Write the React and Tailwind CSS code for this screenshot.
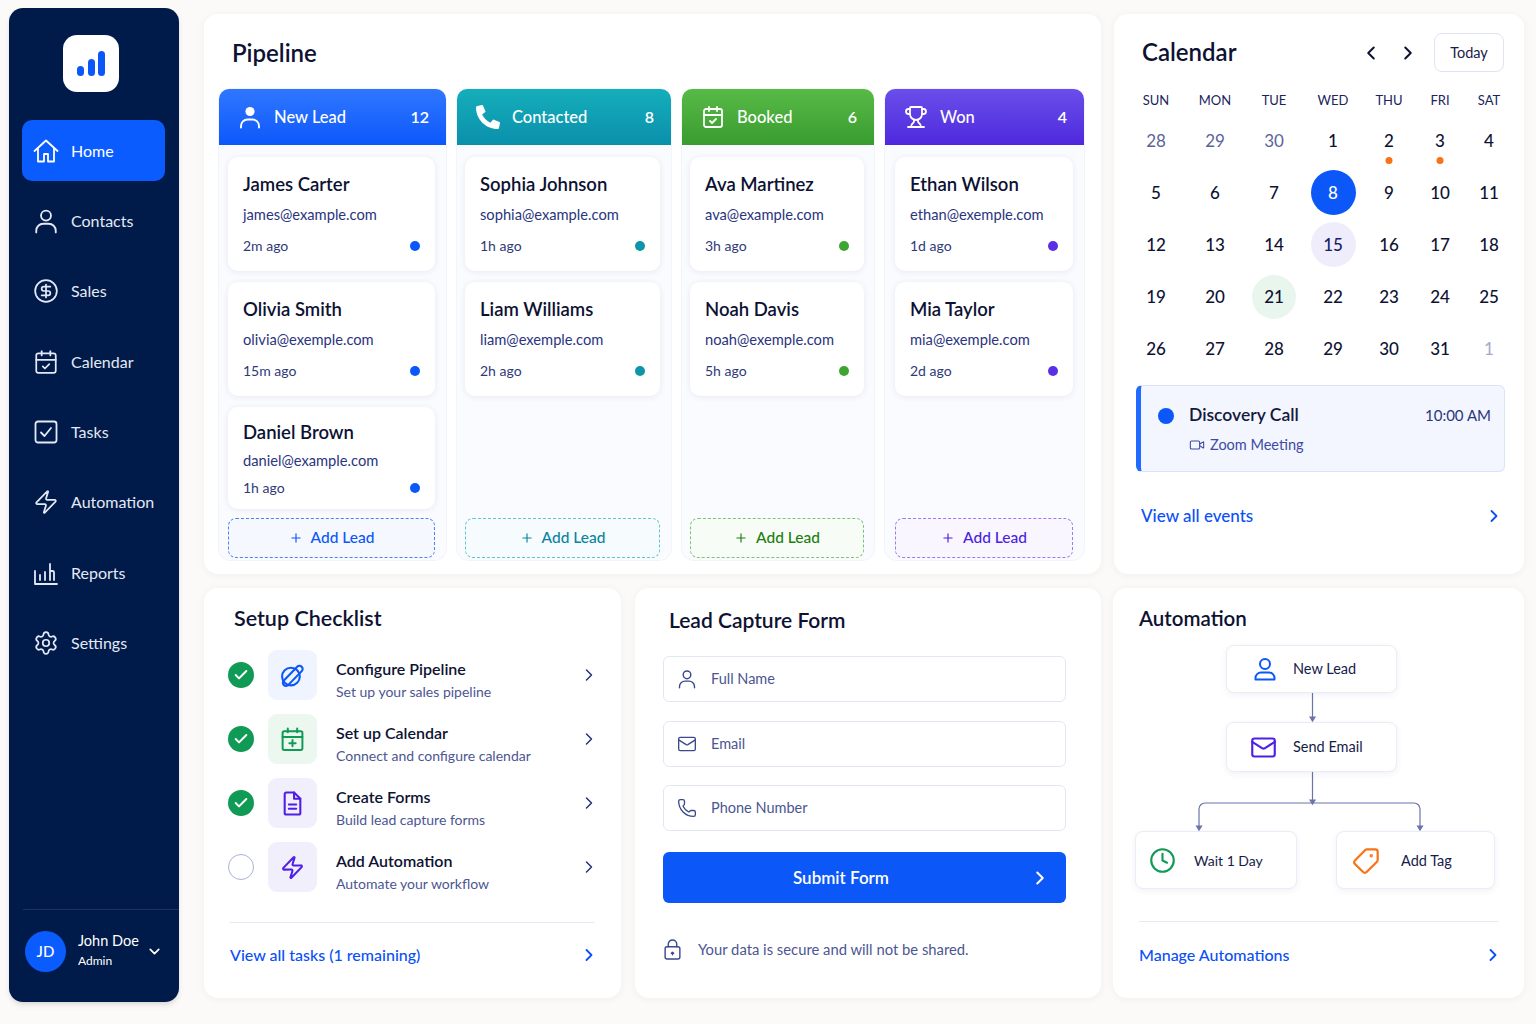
import React from "react";
import {
  CircleDollarSign, CalendarCheck, Zap, Settings, ChevronDown, ChevronLeft, ChevronRight,
  Trophy, Plus, Video, Mail, Phone, Clock, Tag, Check,
} from "lucide-react";
import { FaPhoneAlt } from "react-icons/fa";

const HomeIcon = ({ className }) => (
  <svg viewBox="0 0 26 26" fill="none" stroke="currentColor" strokeWidth="1.8" strokeLinecap="round" strokeLinejoin="round" className={className}>
    <path d="M1.5 13 13 2.5 24.5 13" />
    <path d="M5 10.5V23.5h6v-7.5h4v7.5h6V10.5" />
  </svg>
);

const UserIcon = ({ className }) => (
  <svg viewBox="0 0 24 24" fill="none" stroke="currentColor" strokeWidth="1.7" strokeLinecap="round" strokeLinejoin="round" className={className}>
    <circle cx="12" cy="7" r="4.6" />
    <path d="M3 22.5v-1.5a6.5 6.5 0 0 1 6.5-6.5h5a6.5 6.5 0 0 1 6.5 6.5v1.5" />
  </svg>
);

const LeadHeadIcon = ({ className }) => (
  <svg viewBox="0 0 24 24" fill="none" stroke="currentColor" strokeWidth="1.9" strokeLinecap="round" className={className}>
    <circle cx="12" cy="6.5" r="4.6" fill="currentColor" stroke="none" />
    <path d="M3 22.5v-1.5a6.5 6.5 0 0 1 6.5-6.5h5a6.5 6.5 0 0 1 6.5 6.5v1.5" />
  </svg>
);

const FlowUserIcon = ({ className }) => (
  <svg viewBox="0 0 24 24" fill="none" stroke="currentColor" strokeWidth="2" strokeLinecap="round" strokeLinejoin="round" className={className}>
    <circle cx="12" cy="7" r="5" />
    <path d="M2.5 22.5v-1.5a5.5 5.5 0 0 1 5.5-5.5h8a5.5 5.5 0 0 1 5.5 5.5v1.5z" />
  </svg>
);

const TaskSquareIcon = ({ className }) => (
  <svg viewBox="0 0 26 26" fill="none" stroke="currentColor" strokeWidth="1.8" strokeLinecap="round" strokeLinejoin="round" className={className}>
    <rect x="2.5" y="2.5" width="21" height="21" rx="2.5" />
    <path d="M8 13.5l3.5 3.5L18 9" />
  </svg>
);

const ReportsIcon = ({ className }) => (
  <svg viewBox="0 0 26 26" fill="none" stroke="currentColor" strokeWidth="1.8" strokeLinecap="round" strokeLinejoin="round" className={className}>
    <path d="M2 11v13h22" />
    <path d="M7 20v-5M12 20v-8M17 20V4M17 11h2.5a1.5 1.5 0 0 1 1.5 1.5V20" />
  </svg>
);

const PipelineIcon = ({ className }) => (
  <svg viewBox="0 0 24 24" fill="none" stroke="currentColor" strokeWidth="2" strokeLinecap="round" className={className}>
    <ellipse cx="10.5" cy="13" rx="8.5" ry="8.5" />
    <path d="M3.5 17 16.5 3.6a3 3 0 0 1 4.4 4.2L8 21a3 3 0 0 1-4.5-4z" />
  </svg>
);

const CalendarPlusIcon = ({ className }) => (
  <svg viewBox="0 0 24 24" fill="none" stroke="currentColor" strokeWidth="1.9" strokeLinecap="round" strokeLinejoin="round" className={className}>
    <rect x="2.5" y="4" width="19" height="18" rx="1.5" />
    <path d="M2.5 9.5h19M7.5 1.5V5M16.5 1.5V5M12 12.5v6M9 15.5h6" />
  </svg>
);

const FormIcon = ({ className }) => (
  <svg viewBox="0 0 24 24" fill="none" stroke="currentColor" strokeWidth="2" strokeLinecap="round" strokeLinejoin="round" className={className}>
    <path d="M13.5 1.5H6a1.5 1.5 0 0 0-1.5 1.5v18A1.5 1.5 0 0 0 6 22.5h12a1.5 1.5 0 0 0 1.5-1.5V7.5z" />
    <path d="M13.5 1.5v6h6M8.5 13h7M8.5 17h7" />
  </svg>
);

const LockIcon = ({ className }) => (
  <svg viewBox="0 0 18 22" fill="none" stroke="currentColor" strokeWidth="1.5" strokeLinecap="round" strokeLinejoin="round" className={className}>
    <rect x="1.2" y="8" width="15.6" height="13" rx="2" />
    <path d="M4.5 8V5.5a4.5 4.5 0 0 1 9 0V8" />
    <path d="M9 16.5v-2.5M7.8 15l1.2-1.2 1.2 1.2" />
  </svg>
);

const navItems = [
  { label: "Home", icon: HomeIcon, active: true },
  { label: "Contacts", icon: UserIcon },
  { label: "Sales", icon: CircleDollarSign },
  { label: "Calendar", icon: CalendarCheck },
  { label: "Tasks", icon: TaskSquareIcon },
  { label: "Automation", icon: Zap },
  { label: "Reports", icon: ReportsIcon },
  { label: "Settings", icon: Settings },
];

const columns = [
  {
    title: "New Lead", count: 12, icon: LeadHeadIcon, width: "w-[227px]", body: "pl-[9px] pr-[11px]", head: "bg-gradient-to-b from-[#2f76ff] to-[#0b58fb]",
    dot: "bg-[#0b57f8]", add: "border-[#4d82f5] bg-[#f5f8ff] text-[#0b57f8]",
    cards: [
      ["James Carter", "james@example.com", "2m ago"],
      ["Olivia Smith", "olivia@exemple.com", "15m ago"],
      ["Daniel Brown", "daniel@example.com", "1h ago"],
    ],
  },
  {
    title: "Contacted", count: 8, icon: FaPhoneAlt, width: "w-[214px]", body: "pl-[8px] pr-[11px]", head: "bg-gradient-to-b from-[#15aebb] to-[#0a90ab]",
    dot: "bg-[#0e95a8]", add: "border-[#62c5cf] bg-[#f6fbfd] text-[#0b83a0]",
    cards: [
      ["Sophia Johnson", "sophia@example.com", "1h ago"],
      ["Liam Williams", "liam@exemple.com", "2h ago"],
    ],
  },
  {
    title: "Booked", count: 6, icon: CalendarCheck, width: "w-[192px]", body: "pl-[8px] pr-[10px]", head: "bg-gradient-to-b from-[#58ba46] to-[#389c2f]",
    dot: "bg-[#3ea535]", add: "border-[#7cc574] bg-[#f7fcf6] text-[#1c7f12]",
    cards: [
      ["Ava Martinez", "ava@example.com", "3h ago"],
      ["Noah Davis", "noah@exemple.com", "5h ago"],
    ],
  },
  {
    title: "Won", count: 4, icon: Trophy, width: "w-[199px]", body: "pl-[10px] pr-[11px]", head: "bg-gradient-to-b from-[#6a4dea] to-[#4f27dd]",
    dot: "bg-[#5a2fe6]", add: "border-[#9a7bf2] bg-[#f9f6ff] text-[#4a1fe0]",
    cards: [
      ["Ethan Wilson", "ethan@exemple.com", "1d ago"],
      ["Mia Taylor", "mia@exemple.com", "2d ago"],
    ],
  },
];

const weekdays = ["SUN", "MON", "TUE", "WED", "THU", "FRI", "SAT"];
const days = [28, 29, 30, 1, 2, 3, 4, 5, 6, 7, 8, 9, 10, 11, 12, 13, 14, 15, 16, 17, 18, 19, 20, 21, 22, 23, 24, 25, 26, 27, 28, 29, 30, 31, 1];

const tasks = [
  { title: "Configure Pipeline", sub: "Set up your sales pipeline", icon: PipelineIcon, box: "bg-[#eff4fe] text-[#0b57f8]", done: true },
  { title: "Set up Calendar", sub: "Connect and configure calendar", icon: CalendarPlusIcon, box: "bg-[#ecf7f0] text-[#0f9a55]", done: true },
  { title: "Create Forms", sub: "Build lead capture forms", icon: FormIcon, box: "bg-[#f2effd] text-[#4f1fe6]", done: true },
  { title: "Add Automation", sub: "Automate your workflow", icon: Zap, box: "bg-[#f2effd] text-[#4f1fe6]", done: false },
];

const fields = [
  { placeholder: "Full Name", icon: UserIcon },
  { placeholder: "Email", icon: Mail },
  { placeholder: "Phone Number", icon: Phone },
];

const Sidebar = () => (
  <aside className="w-[170px] h-[994px] bg-[#001a49] rounded-[14px] flex flex-col shadow-md shrink-0">
    <div className="ml-[54px] mt-[27px] w-[56px] h-[57px] bg-white rounded-[14px] flex items-end justify-center gap-[3.5px] pb-[16px]">
      <span className="w-[7px] h-[10px] rounded-full bg-[#0b57f8]" />
      <span className="w-[7px] h-[17px] rounded-full bg-[#0b57f8]" />
      <span className="w-[7px] h-[25px] rounded-full bg-[#0b57f8]" />
    </div>
    <nav className="mt-[28px] ml-[13px] w-[143px] flex flex-col gap-[9.4px]">
      {navItems.map(({ label, icon: Icon, active }) => (
        <div key={label} className={`h-[61px] flex items-center gap-[12px] pl-[11px] rounded-[10px] text-[16px] ${active ? "bg-[#0b5cff] text-white" : "text-[#e4e9f5]"}`}>
          <Icon className="w-[26px] h-[26px]" strokeWidth={1.6} />
          <span>{label}</span>
        </div>
      ))}
    </nav>
    <div className="mt-auto ml-[14px] border-t border-[#1c3160] h-[93px] flex items-center pl-[2px] pb-[10px]">
      <div className="w-[41px] h-[41px] rounded-full bg-[#0b5cff] text-white text-[15px] font-medium flex items-center justify-center">JD</div>
      <div className="ml-[12px] text-white">
        <div className="text-[14.5px] leading-[20px]">John Doe</div>
        <div className="text-[12px] leading-[20px]">Admin</div>
      </div>
      <ChevronDown className="w-[17px] h-[17px] text-white ml-[7px]" strokeWidth={2.4} />
    </div>
  </aside>
);

const LeadCard = ({ name, email, time, dot, compact }) => (
  <div className={`${compact ? "h-[102px] pt-[15px]" : "h-[114px] pt-[17px]"} shrink-0 bg-white rounded-[10px] shadow-[0_1px_6px_rgba(40,60,130,0.09)] px-[15px]`}>
    <div className="text-[18.5px] leading-[20px] font-semibold text-[#0d1233]">{name}</div>
    <div className={`${compact ? "mt-[8px]" : "mt-[10px]"} text-[14.7px] leading-[20px] text-[#2a3580]`}>{email}</div>
    <div className={`${compact ? "mt-[8px]" : "mt-[12px]"} flex items-center justify-between text-[14px] leading-[20px] text-[#2f3a78]`}>
      <span>{time}</span>
      <span className={`w-[10px] h-[10px] rounded-full ${dot}`} />
    </div>
  </div>
);

const Column = ({ col }) => {
  const Icon = col.icon;
  return (
    <div className={`${col.width} flex flex-col bg-[#fafbfe] rounded-[12px] shadow-[0_0_0_1px_#f2f4fa]`}>
      <div className={`h-[56px] shrink-0 rounded-t-[10px] flex items-center pl-[19px] pr-[17px] text-white ${col.head}`}>
        <Icon className="w-[24px] h-[24px] shrink-0" strokeWidth={1.8} />
        <span className="ml-[12px] text-[16.5px] font-medium">{col.title}</span>
        <span className="ml-auto text-[16px] font-semibold">{col.count}</span>
      </div>
      <div className={`flex-1 flex flex-col pt-[12px] pb-[2px] ${col.body}`}>
        <div className="flex flex-col gap-[11px]">
          {col.cards.map(([name, email, time], i) => (
            <LeadCard key={name} name={name} email={email} time={time} dot={col.dot} compact={i === 2} />
          ))}
        </div>
        <button className={`mt-auto h-[40px] shrink-0 rounded-[8px] border border-dashed flex items-center justify-center gap-[8px] text-[15.5px] font-medium ${col.add}`}>
          <Plus className="w-[14px] h-[14px]" strokeWidth={2} />
          Add Lead
        </button>
      </div>
    </div>
  );
};

const Pipeline = () => (
  <section className="w-[897px] h-[560px] bg-white rounded-[14px] shadow-[0_1px_8px_rgba(40,40,60,0.05)] px-[15px] flex flex-col">
    <h2 className="h-[75px] pt-[3px] pl-[13px] flex items-center text-[24px] font-semibold text-[#0d1233]">Pipeline</h2>
    <div className="flex gap-[11px] h-[471px]">
      {columns.map((col) => (
        <Column key={col.title} col={col} />
      ))}
    </div>
  </section>
);

const dayClass = (i) => {
  if (i < 3) return "text-[#5a6399]";
  if (i === 34) return "text-[#a4abc9]";
  return "text-[#0d1233] font-medium";
};

const CalendarCard = () => (
  <section className="w-[410px] h-[560px] bg-white rounded-[14px] shadow-[0_1px_8px_rgba(40,40,60,0.05)] pt-[19px] flex flex-col">
    <div className="flex items-center pl-[28px] pr-[20px]">
      <h2 className="-mt-[2px] text-[24px] font-semibold text-[#0d1233]">Calendar</h2>
      <ChevronLeft className="ml-auto w-[22px] h-[22px] text-[#0d1233]" strokeWidth={2.2} />
      <ChevronRight className="ml-[15px] w-[22px] h-[22px] text-[#0d1233]" strokeWidth={2.2} />
      <button className="ml-[15px] w-[70px] h-[39px] border border-[#dfe4f3] rounded-[8px] text-[14.5px] text-[#1a2048]">Today</button>
    </div>
    <div className="ml-[12.5px] mt-[18px] grid grid-cols-[59px_59px_59px_59px_53px_49px_49px] text-center">
      {weekdays.map((d) => (
        <div key={d} className="h-[20px] leading-[20px] text-[13px] text-[#1a2460]">{d}</div>
      ))}
    </div>
    <div className="ml-[12.5px] mt-[5px] grid grid-cols-[59px_59px_59px_59px_53px_49px_49px] auto-rows-[51.9px] text-center">
      {days.map((d, i) => (
        <div key={i} className={`relative flex items-center justify-center text-[17px] ${dayClass(i)}`}>
          {i === 10 && <span className="w-[45px] h-[45px] rounded-full bg-[#0b57f8] text-white flex items-center justify-center">{d}</span>}
          {i === 17 && <span className="w-[45px] h-[45px] rounded-full bg-[#efedfb] text-[#15206b] flex items-center justify-center">{d}</span>}
          {i === 23 && <span className="w-[44px] h-[44px] rounded-full bg-[#e8f6ee] flex items-center justify-center">{d}</span>}
          {i !== 10 && i !== 17 && i !== 23 && d}
          {(i === 4 || i === 5) && <span className="absolute left-1/2 -translate-x-1/2 top-[42px] w-[7px] h-[7px] rounded-full bg-[#f97316]" />}
        </div>
      ))}
    </div>
    <div className="ml-[22px] mt-[11px] w-[369px] h-[87px] shrink-0 rounded-[6px] bg-[#f3f6fe] border border-[#d9e3fb] border-l-[5px] border-l-[#1f6bff] pl-[17px] pr-[13px] pt-[16px]">
      <div className="flex items-center">
        <span className="w-[16px] h-[16px] rounded-full bg-[#0b57f8]" />
        <span className="ml-[15px] text-[17.5px] font-semibold text-[#131a3c]">Discovery Call</span>
        <span className="ml-auto text-[15px] text-[#2a3580]">10:00 AM</span>
      </div>
      <div className="mt-[5px] ml-[31px] flex items-center gap-[5px] text-[14.5px] text-[#3d4aa3]">
        <Video className="w-[16px] h-[16px]" strokeWidth={1.6} />
        Zoom Meeting
      </div>
    </div>
    <div className="mt-[31px] pl-[27px] pr-[20px] flex items-center justify-between text-[#0b4ff5]">
      <span className="text-[17px] font-medium">View all events</span>
      <ChevronRight className="w-[20px] h-[20px]" strokeWidth={2.2} />
    </div>
  </section>
);

const Checklist = () => (
  <section className="w-[417px] h-[410px] bg-white rounded-[14px] shadow-[0_1px_8px_rgba(40,40,60,0.05)] pt-[15px] pl-[24px] pr-[27px]">
    <h2 className="pl-[6px] text-[21.5px] leading-[30px] font-semibold text-[#0d1233]">Setup Checklist</h2>
    <div className="mt-[17px] flex flex-col gap-[14px]">
      {tasks.map(({ title, sub, icon: Icon, box, done }) => (
        <div key={title} className="h-[50px] flex items-center">
          {done ? (
            <span className="w-[26px] h-[26px] rounded-full bg-[#0f9a55] flex items-center justify-center">
              <Check className="w-[16px] h-[16px] text-white" strokeWidth={3} />
            </span>
          ) : (
            <span className="w-[26px] h-[26px] rounded-full border border-[#aab2d6]" />
          )}
          <span className={`ml-[14px] w-[49px] h-[50px] rounded-[9px] flex items-center justify-center ${box}`}>
            <Icon className="w-[25px] h-[25px]" strokeWidth={2} />
          </span>
          <div className="ml-[19px] flex-1 pt-[10px]">
            <div className="text-[16px] leading-[23px] font-semibold text-[#0d1233]">{title}</div>
            <div className="text-[14px] leading-[23px] text-[#4c5693]">{sub}</div>
          </div>
          <ChevronRight className="-mr-[5px] w-[20px] h-[20px] text-[#25327a]" strokeWidth={1.8} />
        </div>
      ))}
    </div>
    <div className="mt-[30px] ml-[2px] border-t border-[#e5e9f4] pt-[20px] flex items-center justify-between text-[#0b4ff5]">
      <span className="text-[16px] font-medium">View all tasks (1 remaining)</span>
      <ChevronRight className="-mr-[5px] w-[20px] h-[20px]" strokeWidth={2.2} />
    </div>
  </section>
);

const LeadForm = () => (
  <section className="w-[466px] h-[410px] bg-white rounded-[14px] shadow-[0_1px_8px_rgba(40,40,60,0.05)] pt-[17px] pl-[28px] pr-[35px]">
    <h2 className="pl-[6px] text-[21px] leading-[30px] font-semibold text-[#0d1233]">Lead Capture Form</h2>
    <div className="mt-[21px] flex flex-col gap-[18.5px]">
      {fields.map(({ placeholder, icon: Icon }) => (
        <label key={placeholder} className="h-[46px] border border-[#e3e7f2] rounded-[6px] flex items-center pl-[13px]">
          <Icon className="w-[20px] h-[20px] text-[#3a4a8c]" strokeWidth={1.6} />
          <input placeholder={placeholder} className="ml-[14px] flex-1 outline-none text-[14.5px] placeholder:text-[#4c5693]" />
        </label>
      ))}
    </div>
    <button className="mt-[21px] w-full h-[51px] rounded-[6px] bg-[#0b57f8] text-white flex items-center justify-between pl-[130px] pr-[15px] text-[17px] font-semibold">
      Submit Form
      <ChevronRight className="w-[22px] h-[22px]" strokeWidth={2.2} />
    </button>
    <div className="mt-[35px] flex items-center text-[14.8px] text-[#4c5693]">
      <LockIcon className="ml-[1px] w-[17px] h-[21px] text-[#3a4a8c]" />
      <span className="ml-[17px]">Your data is secure and will not be shared.</span>
    </div>
  </section>
);

const FlowNode = ({ pos, icon: Icon, iconClass, label, labelClass = "text-[14.5px]" }) => (
  <div className={`absolute bg-white rounded-[8px] border border-[#eaedf6] shadow-[0_2px_6px_rgba(40,60,130,0.07)] flex items-center text-[#151b4a] ${pos}`}>
    <Icon className={iconClass} strokeWidth={1.9} />
    <span className={labelClass}>{label}</span>
  </div>
);

const AutomationCard = () => (
  <section className="w-[411px] h-[410px] bg-white rounded-[14px] shadow-[0_1px_8px_rgba(40,40,60,0.05)] pt-[15px]">
    <h2 className="pl-[26px] text-[20.5px] leading-[30px] font-semibold text-[#0d1233]">Automation</h2>
    <div className="relative mt-[12px] h-[244px]">
      <svg className="absolute inset-0 w-full h-full" fill="none" stroke="#6a75ab" strokeWidth="1.2">
        <path d="M199.5 48V75M199.5 127V157M86 184V164a6 6 0 0 1 6-6H301a6 6 0 0 1 6 6V184" />
        <path d="M197 72l2.5 4 2.5-4zM197 155l2.5 4 2.5-4zM83.5 181l2.5 4 2.5-4zM304.5 181l2.5 4 2.5-4z" fill="#6a75ab" />
      </svg>
      <FlowNode pos="left-[113px] top-0 w-[171px] h-[48px]" icon={FlowUserIcon} iconClass="ml-[26px] mr-[16px] w-[24px] h-[24px] text-[#0b57f8]" label="New Lead" />
      <FlowNode pos="left-[113px] top-[77px] w-[171px] h-[50px]" icon={Mail} iconClass="ml-[23px] mr-[16px] w-[27px] h-[27px] text-[#4f1fe6]" label="Send Email" />
      <FlowNode pos="left-[22px] top-[186px] w-[162px] h-[58px] pt-[1px]" icon={Clock} iconClass="ml-[13px] mr-[18px] w-[27px] h-[27px] text-[#0f9a55]" label="Wait 1 Day" labelClass="text-[14px]" />
      <FlowNode pos="left-[223px] top-[186px] w-[159px] h-[58px] pt-[1px]" icon={Tag} iconClass="-scale-x-100 ml-[15px] mr-[21px] w-[28px] h-[28px] text-[#f97316]" label="Add Tag" />
    </div>
    <div className="mt-[32px] mx-[26px] border-t border-[#e5e9f4] pt-[21px] flex items-center justify-between text-[#0b4ff5]">
      <span className="text-[16px] font-medium">Manage Automations</span>
      <ChevronRight className="-mr-[5px] w-[20px] h-[20px]" strokeWidth={2.2} />
    </div>
  </section>
);

export default function App() {
  return (
    <div className="min-h-screen bg-[#fbfaf8] flex pl-[9px] pt-[8px] [font-family:Lato,sans-serif]">
      <Sidebar />
      <main className="ml-[25px] mt-[6px] flex flex-col gap-[14px]">
        <div className="flex gap-[13px]">
          <Pipeline />
          <CalendarCard />
        </div>
        <div className="flex">
          <Checklist />
          <div className="ml-[14px]"><LeadForm /></div>
          <div className="ml-[12px]"><AutomationCard /></div>
        </div>
      </main>
    </div>
  );
}
